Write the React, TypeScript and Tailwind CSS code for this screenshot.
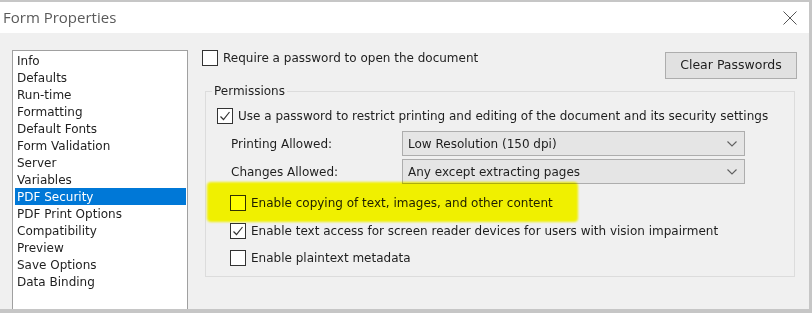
import React from "react";

// Form Properties ダイアログ (PDF Security)
const items = [
  "Info",
  "Defaults",
  "Run-time",
  "Formatting",
  "Default Fonts",
  "Form Validation",
  "Server",
  "Variables",
  "PDF Security",
  "PDF Print Options",
  "Compatibility",
  "Preview",
  "Save Options",
  "Data Binding",
];

const CheckBox = ({ checked = false }: { checked?: boolean }) => (
  <div className="flex h-4 w-4 shrink-0 items-center justify-center border border-[#333] bg-white">
    {checked && (
      <svg width="14" height="14" viewBox="0 0 14 14">
        <polyline points="2.5,7.5 5.5,10.5 11.5,3" fill="none" stroke="#333" strokeWidth="1.2" />
      </svg>
    )}
  </div>
);

const CheckRow = ({ checked, label }: { checked?: boolean; label: string }) => (
  <div className="flex h-4 items-center gap-[5px]">
    <CheckBox checked={checked} />
    <span className="whitespace-nowrap">{label}</span>
  </div>
);

const Select = ({ value }: { value: string }) => (
  <div className="flex h-[25px] w-[343px] items-center justify-between border border-[#adadad] bg-[#e5e5e5] pl-[5px] pr-[7px]">
    <span className="whitespace-nowrap">{value}</span>
    <svg width="10" height="6" viewBox="0 0 10 6">
      <polyline points="0.5,0.5 5,5 9.5,0.5" fill="none" stroke="#606060" strokeWidth="1.1" />
    </svg>
  </div>
);

export default function App() {
  return (
    <div className="relative flex h-[313px] w-[812px] flex-col overflow-hidden border-t-2 border-r-[3px] border-b-4 border-[#c6c6c6] bg-[#f0f0f0] font-['DejaVu_Sans',Verdana,sans-serif] text-[12px] text-[#1e1e1e]">
      {/* タイトルバー */}
      <div className="flex h-[31px] shrink-0 items-center justify-between bg-white pl-[3px] pr-[12px]">
        <span className="font-['Open_Sans',sans-serif] text-[15px] text-[#5a5a5a]">Form Properties</span>
        <svg width="14" height="14" viewBox="0 0 14 14">
          <line x1="0.5" y1="0.5" x2="13.5" y2="13.5" stroke="#555" strokeWidth="1" />
          <line x1="13.5" y1="0.5" x2="0.5" y2="13.5" stroke="#555" strokeWidth="1" />
        </svg>
      </div>

      <div className="flex flex-1 pl-3 pr-3 pt-[17px]">
        {/* 左のリスト */}
        <div className="mb-[-2px] w-[176px] shrink-0 border border-[#a0a0a0] bg-white pl-[2px] pr-px pt-px">
          {items.map((it) => (
            <div
              key={it}
              className={`h-[17px] pl-[2px] leading-[18px] ${it === "PDF Security" ? "bg-[#0078d7] text-white" : ""}`}
            >
              {it}
            </div>
          ))}
        </div>

        {/* 右側 */}
        <div className="ml-[14px] flex flex-1 flex-col">
          <div className="flex items-start justify-between">
            <CheckRow label="Require a password to open the document" />
            <button className="mt-[2px] h-[27px] w-[132px] border border-[#adadad] bg-[#e1e1e1] text-[12.5px] text-[#1e1e1e]">
              Clear Passwords
            </button>
          </div>

          <fieldset className="mr-[2px] ml-[3px] mt-[4px] border border-[#dcdcdc] pb-[10px]">
            <legend className="ml-[6px] px-[2px] leading-[16px]">Permissions</legend>
            <div className="mt-[9px] pl-[11px]">
              <CheckRow checked label="Use a password to restrict printing and editing of the document and its security settings" />
            </div>
            <div className="mt-[7px] flex items-center pl-[25px]">
              <span className="w-[171px]">Printing Allowed:</span>
              <Select value="Low Resolution (150 dpi)" />
            </div>
            <div className="mt-[3px] flex items-center pl-[25px]">
              <span className="w-[171px]">Changes Allowed:</span>
              <Select value="Any except extracting pages" />
            </div>
            <div className="mt-[11px] pl-[24px]">
              <CheckRow label="Enable copying of text, images, and other content" />
            </div>
            <div className="mt-[12px] pl-[24px]">
              <CheckRow checked label="Enable text access for screen reader devices for users with vision impairment" />
            </div>
            <div className="mt-[11px] pl-[24px]">
              <CheckRow label="Enable plaintext metadata" />
            </div>
          </fieldset>
        </div>
      </div>

      {/* 黄色のハイライト */}
      <div className="pointer-events-none absolute left-[207px] top-[180px] h-[40px] w-[371px] rounded-[4px] bg-[#ffff00] mix-blend-multiply blur-[1px]" />
    </div>
  );
}
